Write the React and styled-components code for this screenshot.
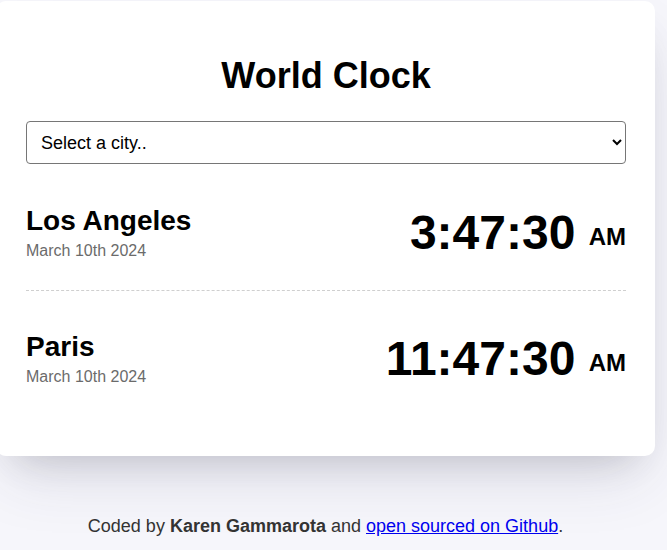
import React from "react";
import styled, { createGlobalStyle } from "styled-components";

const GlobalStyle = createGlobalStyle`
  html, body {
    margin: 0;
    padding: 0;
    background: #f6f6fb;
    font-family: "Liberation Sans", Arial, sans-serif;
    color: #000;
  }
  * { box-sizing: border-box; }
`;

const Page = styled.div`
  padding-top: 1px;
  overflow: hidden;
  min-height: 550px;
`;

const Container = styled.div`
  margin-left: -4px;
  width: 659px;
`;

const Card = styled.main`
  background: #fff;
  border-radius: 10px;
  padding: 30px 29px 40px 30px;
  box-shadow: 0 30px 60px -12px rgba(50, 50, 93, 0.14),
    0 18px 36px -18px rgba(0, 0, 0, 0.16);
`;

const Title = styled.h1`
  margin: 24px 0;
  font-size: 36px;
  font-weight: 700;
  text-align: center;
  line-height: normal;
`;

const CitySelect = styled.select`
  display: block;
  width: 100%;
  height: 43px;
  padding: 0 10px;
  font-family: "Liberation Sans", Arial, sans-serif;
  font-size: 18px;
  color: #000;
  background: #fff;
  border: 1px solid #767676;
  border-radius: 4px;
  margin: 0 0 1px;
`;

const CityRow = styled.div`
  display: flex;
  justify-content: space-between;
  align-items: center;
  padding: 40px 0 30px;
  border-bottom: ${(p) => (p.$last ? "none" : "1px dashed #cfcfcf")};
`;

const CityInfo = styled.div`
  display: flex;
  flex-direction: column;
`;

const CityName = styled.div`
  font-size: 28px;
  font-weight: 700;
  line-height: 32px;
`;

const CityDate = styled.div`
  margin-top: 5px;
  font-size: 16px;
  line-height: 18px;
  color: #6b6b6b;
`;

const Time = styled.div`
  font-size: 48px;
  font-weight: 700;
  line-height: 55px;
  height: 55px;
  white-space: nowrap;
`;

const Meridiem = styled.small`
  font-size: 24px;
  line-height: 1;
  vertical-align: 4px;
`;

const Footer = styled.footer`
  margin-top: 60px;
  text-align: center;
  font-size: 18px;
  color: #333;
  line-height: normal;

  a {
    color: #0000ee;
    text-decoration: underline;
  }
`;

const cities = [
  { name: "Los Angeles", date: "March 10th 2024", time: "3:47:30", ampm: "AM" },
  { name: "Paris", date: "March 10th 2024", time: "11:47:30", ampm: "AM" },
];

export default function App() {
  return (
    <>
      <GlobalStyle />
      <Page>
        <Container>
          <Card>
            <Title>World Clock</Title>
            <CitySelect defaultValue="">
              <option value="">Select a city..</option>
              <option value="local">My current location</option>
              <option value="tokyo">Tokyo</option>
              <option value="sydney">Sydney</option>
            </CitySelect>
            {cities.map((c, i) => (
              <CityRow key={c.name} $last={i === cities.length - 1}>
                <CityInfo>
                  <CityName>{c.name}</CityName>
                  <CityDate>{c.date}</CityDate>
                </CityInfo>
                <Time>
                  {c.time} <Meridiem>{c.ampm}</Meridiem>
                </Time>
              </CityRow>
            ))}
          </Card>
          <Footer>
            Coded by <strong>Karen Gammarota</strong> and{" "}
            <a href="#">open sourced on Github</a>.
          </Footer>
        </Container>
      </Page>
    </>
  );
}
